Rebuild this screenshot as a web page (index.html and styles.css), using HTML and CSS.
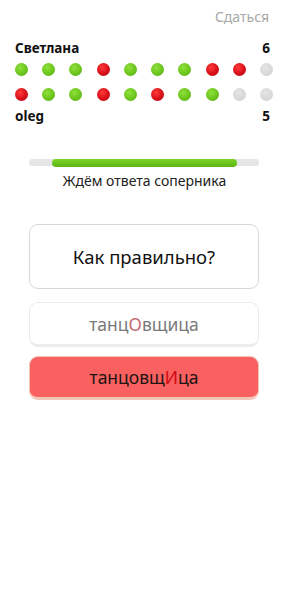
FILE: index.html
```html
<!DOCTYPE html>
<html lang="ru">
<head>
<meta charset="utf-8">
<link rel="stylesheet" href="styles.css">
</head>
<body>
<div class="page">
  <div class="top"><span class="giveup">Сдаться</span></div>
  <div class="player"><span>Светлана</span><span>6</span></div>
  <div class="dots">
    <i class="g"></i><i class="g"></i><i class="g"></i><i class="r"></i><i class="g"></i><i class="g"></i><i class="g"></i><i class="r"></i><i class="r"></i><i class="e"></i>
  </div>
  <div class="dots">
    <i class="r"></i><i class="g"></i><i class="g"></i><i class="r"></i><i class="g"></i><i class="r"></i><i class="g"></i><i class="g"></i><i class="e"></i><i class="e"></i>
  </div>
  <div class="player p2"><span>oleg</span><span>5</span></div>
  <div class="progress"><div class="fill"></div></div>
  <div class="wait">Ждём ответа соперника</div>
  <div class="question">Как правильно?</div>
  <div class="option">танц<span class="hl1">О</span>вщица</div>
  <div class="option wrong">танцовщ<span class="hl2">И</span>ца</div>
</div>
</body>
</html>
```
FILE: styles.css
```css
html, body { margin: 0; padding: 0; background: #fff; }
body { font-family: "Noto Sans", "Open Sans", sans-serif; color: #1a1a1a; }
.page { width: 289px; box-sizing: border-box; }
.top { display: flex; justify-content: flex-end; padding: 7px 20px 0 0; height: 30px; box-sizing: border-box; }
.giveup { color: #a8a8a8; font-size: 14px; line-height: 20px; }
.player { display: flex; justify-content: space-between; padding: 9px 19px 0 15px; font-weight: 700; font-size: 13.5px; line-height: 18px; color: #111; }
.dots { display: flex; justify-content: space-between; padding: 0 16px 0 15px; }
.player + .dots { margin-top: 6px; }
.dots + .dots { margin-top: 12px; }
.dots i { width: 13px; height: 13px; border-radius: 50%; display: block; }
.dots i.g { background: radial-gradient(circle at 40% 35%, #8fe03c 0%, #6cc51c 55%, #55a812 100%); }
.dots i.r { background: radial-gradient(circle at 40% 35%, #ff3a3a 0%, #d60f17 55%, #b00810 100%); }
.dots i.e { background: radial-gradient(circle at 40% 35%, #e4e4e4 0%, #d6d6d6 70%, #cccccc 100%); }
.p2 { padding-top: 6px; }
.progress { margin: 34px 30px 0 29px; height: 7px; border-radius: 4px; background: #e5e5e5; }
.fill { margin-left: 23px; width: 185px; height: 8px; margin-top: -0.5px; border-radius: 4px; background: linear-gradient(#7cd626, #5cb514); }
.wait { text-align: center; font-size: 14px; line-height: 18px; margin-top: 6px; color: #222; }
.question { margin: 34px 30px 0 29px; height: 65px; border: 1.5px solid #d8d8d8; border-radius: 9px; box-sizing: border-box; display: flex; align-items: center; justify-content: center; font-size: 18.5px; color: #111; }
.option { margin: 13px 30px 0 29px; height: 45px; border: 1.5px solid #ececec; border-bottom-width: 3px; border-radius: 9px; box-sizing: border-box; display: flex; align-items: center; justify-content: center; font-size: 17.5px; color: #7a7a7a; padding-top: 1px; }
.hl1 { color: #c46b72; }
.wrong { margin-top: 9px; background: #f8615f; border-color: #f2c7b8; border-width: 1.5px; border-bottom-width: 3px; color: #1e1414; height: 44px; }
.hl2 { color: #d20a14; }
```
